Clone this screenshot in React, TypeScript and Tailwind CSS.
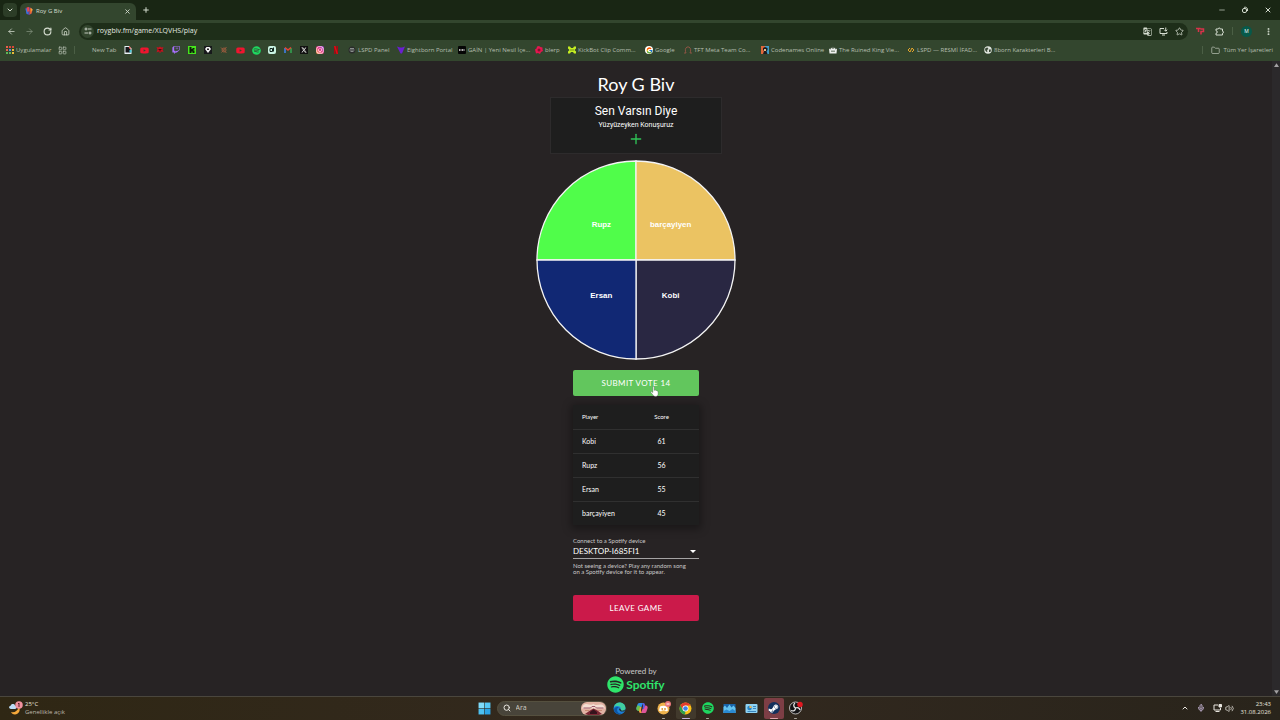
import { PropsWithChildren, ReactNode } from 'react'
import { clsx } from 'clsx'
import {
  ArrowLeft,
  ArrowRight,
  ChevronDown,
  ChevronUp,
  EllipsisVertical,
  Folder,
  House,
  LayoutGrid,
  Mic,
  Minus,
  Plus,
  RotateCw,
  Search,
  Star,
  Volume2,
  X
} from 'lucide-react'
import { FaInstagram, FaSpotify, FaSteamSymbol, FaTwitch, FaXTwitter, FaYoutube } from 'react-icons/fa6'
import { FcGoogle } from 'react-icons/fc'
import { MdGTranslate } from 'react-icons/md'

const uiFont = "font-['Open_Sans','Noto_Sans',sans-serif]"

/* ---------- small drawings ---------- */

const RoyIcon = () => (
  <svg viewBox="0 0 16 16" className="size-2 shrink-0">
    <path d="M1 3l7-3 7 4-1 8-5 4-6-2z" fill="#5b3fa0" />
    <path d="M1 3l5 1 1 11-4-2z" fill="#3478d8" />
    <path d="M3 1l5-1 1 8-4 2z" fill="#e5484d" />
    <path d="M10 1l5 4-2 8-4 2z" fill="#e8672e" />
    <path d="M12 2l3 3-2 5z" fill="#f2c036" />
  </svg>
)

const TuneIcon = () => (
  <svg viewBox="0 0 16 16" className="size-2" fill="none" stroke="currentColor" strokeWidth="1.8">
    <circle cx="4" cy="4" r="2" />
    <path d="M8 4h7M1 12h7" />
    <circle cx="12" cy="12" r="2" />
  </svg>
)

const InstallIcon = () => (
  <svg viewBox="0 0 18 18" className="size-[9px]" fill="none" stroke="currentColor" strokeWidth="2">
    <path d="M10 3H2v10h14v-3M6 16h6" />
    <path d="M13.500 1v7M10.500 5.500l3 3 3-3" />
  </svg>
)

const PuzzleIcon = () => (
  <svg viewBox="0 0 18 18" className="size-[9px]" fill="none" stroke="currentColor" strokeWidth="2">
    <path d="M2 4h4.500a2 2 0 0 1 4 0H15v4.500a2 2 0 0 1 0 4V16H2v-3.500a2 2 0 0 0 0-5z" strokeLinejoin="round" />
  </svg>
)

const AppsIcon = () => (
  <svg viewBox="0 0 8 8" className="size-2 shrink-0">
    <path d="M0 0h2v2H0zM0 3h2v2H0z" fill="#e8604c" />
    <path d="M0 6h2v2H0zM3 6h2v2H3z" fill="#5fb65a" />
    <path d="M3 0h2v2H3zM6 0h2v2H6z" fill="#d9493b" />
    <path d="M3 3h2v2H3z" fill="#4f8bf0" />
    <path d="M6 3h2v2H6zM6 6h2v2H6z" fill="#e9b93a" />
  </svg>
)

const PageIcon = () => (
  <svg viewBox="0 0 16 16" className="size-2">
    <path d="M1 0h9l5 5v11H1z" fill="#e9f1f5" />
    <path d="M3 2h6l4 4v7H3z" fill="#16181a" />
    <path d="M10 0l5 5h-5z" fill="#ef5350" />
    <path d="M11 8h4v5h-4z" fill="#48c7d8" />
  </svg>
)

const RedCrestIcon = () => (
  <svg viewBox="0 0 16 16" className="size-2">
    <path d="M1 2l4 1 3-2 3 2 4-1-2 5 2 5-4-1-3 3-3-3-4 2 2-6z" fill="#c4121f" />
    <path d="M5 6h6v2H9v3H7V8H5z" fill="#4a0a10" />
  </svg>
)

const KickIcon = () => (
  <svg viewBox="0 0 16 16" className="size-2">
    <path d="M0 0h16v16H0z" fill="#45e51c" />
    <path d="M3 2h4v4h2V4h4v3h-2v2h2v5H9v-3H7v3H3z" fill="#0c1d08" />
  </svg>
)

const DiamondIcon = () => (
  <svg viewBox="0 0 16 16" className="size-2">
    <path d="M0 0h16v16H0z" fill="#17191b" />
    <path d="M5 2h6l3 4-6 8-6-8z" fill="#f4f4f4" />
    <path d="M6 5h4v3H6z" fill="#222" />
  </svg>
)

const KnotIcon = () => (
  <svg viewBox="0 0 16 16" className="size-2" fill="none" stroke="#9a5b3d" strokeWidth="2">
    <path d="M2 3l11 11M13 2L3 13" />
    <circle cx="8" cy="8" r="4" />
  </svg>
)

const GlyphDIcon = () => (
  <svg viewBox="0 0 16 16" className="size-2">
    <rect width="16" height="16" rx="4" fill="#c9f3e2" />
    <path d="M4 5h5v6H4zM11 3v8" fill="none" stroke="#10251d" strokeWidth="2" />
  </svg>
)

const GmailIcon = () => (
  <svg viewBox="0 0 16 16" className="size-2" fill="none" strokeWidth="3">
    <path d="M2 14V4" stroke="#4285f4" />
    <path d="M14 14V4" stroke="#34a853" />
    <path d="M2 3l6 5 6-5" stroke="#ea4335" />
  </svg>
)

const RedBarsIcon = () => (
  <svg viewBox="0 0 16 16" className="size-2">
    <path d="M4 0h3v16H4zM9 0h3v16H9z" fill="#a80812" />
    <path d="M4 0h3l5 16H9z" fill="#e50914" />
  </svg>
)

const CapIcon = () => (
  <svg viewBox="0 0 16 16" className="size-2 shrink-0">
    <circle cx="8" cy="8" r="7" fill="#2a2c2b" />
    <path d="M4 5h8M3 8h10M5 11h6" stroke="#aab0ad" strokeWidth="1.5" />
  </svg>
)

const PurpleVIcon = () => (
  <svg viewBox="0 0 16 16" className="size-2 shrink-0">
    <path d="M0 1l6 2h4l6-2-6 14H7z" fill="#6a1fd0" />
  </svg>
)

const GainIcon = () => (
  <svg viewBox="0 0 16 16" className="size-2 shrink-0">
    <rect width="16" height="16" rx="2" fill="#050505" />
    <path d="M2 8h12" stroke="#eee" strokeWidth="3" strokeDasharray="2 1" />
  </svg>
)

const BlerpIcon = () => (
  <svg viewBox="0 0 16 16" className="size-2 shrink-0">
    <path d="M8 0l3 2 4 1v4l1 3-4 2-2 4-4-2-4 1-1-4-1-4 3-2 1-4z" fill="#e5164f" />
    <circle cx="8" cy="8" r="3" fill="#86122f" />
  </svg>
)

const KickBotIcon = () => (
  <svg viewBox="0 0 16 16" className="size-2 shrink-0">
    <path d="M0 1h4l2 3h4l2-3h4v4l-3 3 3 3v4h-4l-2-3H6l-2 3H0v-4l3-3-3-3z" fill="#c5ee22" />
    <path d="M5 7h2v2H5zM9 7h2v2H9z" fill="#293a13" />
  </svg>
)

const GoogleBadge = () => (
  <span className="flex size-2 shrink-0 items-center justify-center rounded-full bg-white">
    <FcGoogle className="size-[7px]" />
  </span>
)

const HornsIcon = () => (
  <svg viewBox="0 0 16 16" className="size-2 shrink-0" fill="none" stroke="#a3584a" strokeWidth="1.6">
    <path d="M6 2C2 4 2 10 4 14H0M10 2c4 2 4 8 2 12h4M6 2h4" />
  </svg>
)

const CodenamesIcon = () => (
  <svg viewBox="0 0 16 16" className="size-2 shrink-0">
    <path d="M0 0h8v16H0z" fill="#e0673a" />
    <path d="M8 0h8v16H8z" fill="#3f9cc7" />
    <path d="M4 4l4-2 5 2v4l-2 3 2 5H4l2-6-2-2z" fill="#1b1b20" />
    <path d="M6 6h4v4H6z" fill="#e8c08d" />
  </svg>
)

const CrownIcon = () => (
  <svg viewBox="0 0 16 16" className="size-2 shrink-0">
    <path d="M0 5l3 2 1-4 3 3 1-5 1 5 3-3 1 4 3-2-1 10H1z" fill="#eef0ee" />
    <path d="M5 9h2v3H5zM9 9h2v3H9z" fill="#33462e" />
  </svg>
)

const LoopIcon = () => (
  <svg viewBox="0 0 16 16" className="size-2 shrink-0" fill="none" stroke="#e5a52b" strokeWidth="2">
    <path d="M6 4L2 8l4 4 4-8 4 4-4 4" />
  </svg>
)

const GlobeIcon = () => (
  <svg viewBox="0 0 16 16" className="size-2 shrink-0">
    <circle cx="8" cy="8" r="7.5" fill="#dfe5dd" />
    <path d="M3 4l4-1 2 3-3 2 1 3-2 1-3-4zM10 7l4 0-1 5-3 0z" fill="#3c4b38" />
  </svg>
)

const HandCursor = () => (
  <svg viewBox="0 0 16 20" className="absolute left-[77px] top-4 h-[11px] w-[9px]">
    <path
      d="M5 1.500c0-1.500 2.500-1.500 2.500 0V8l1-.5c.8-.4 1.800 0 2 .8.9-.4 1.900 0 2.100.9 1-.3 1.900.3 1.900 1.300V14c0 3-1.500 5-4.500 5-2.600 0-3.800-1-5-3L1.500 12c-.8-1.500 1-2.600 2.100-1.300L5 12z"
      fill="#fff"
      stroke="#444"
      strokeWidth=".6"
    />
  </svg>
)

const WeatherIcon = () => (
  <svg viewBox="0 0 28 28" className="size-[14px]">
    <path d="M20 12c4 7-1 15-8 15-4 0-7-2-8-5 7 2 13-2 16-10z" fill="#f5a83b" />
    <path d="M4 16c-5 0-5-6-1-6 1-5 8-5 9-1 4 0 4 7 0 7z" fill="#bcdcf5" />
    <circle cx="20" cy="8" r="7.500" fill="#f0919e" />
    <path d="M18 6l2-2v8" stroke="#5a1e2c" strokeWidth="2" fill="none" />
  </svg>
)

const WindowsIcon = () => (
  <svg viewBox="0 0 24 24" className="size-[13px]">
    <path d="M1 1h10.500v10.500H1z" fill="#7fdcfb" />
    <path d="M12.500 1H23v10.500H12.500z" fill="#56c8f5" />
    <path d="M1 12.500h10.500V23H1z" fill="#4cc0f0" />
    <path d="M12.500 12.500H23V23H12.500z" fill="#2ba3e4" />
  </svg>
)

const SearchArt = () => (
  <svg viewBox="0 0 50 26" className="h-[13px] w-[25px] shrink-0">
    <rect width="50" height="26" rx="12" fill="#e2b3a3" />
    <path d="M4 7c8-8 14 2 21-3 7 6 13-3 21 4l2 5H2z" fill="#f3ded2" />
    <path d="M8 24l10-7 7-4 8 4 9 7-6 2H14z" fill="#7a2733" />
    <path d="M5 12h14l3-3h6l3 3h14" stroke="#9d5a6c" strokeWidth="2" fill="none" />
    <path d="M8 17h8M34 17h8" stroke="#c98a72" strokeWidth="2" />
    <path d="M18 20l7-5 7 5v4H18z" fill="#35131c" />
  </svg>
)

const EdgeIcon = () => (
  <svg viewBox="0 0 24 24" className="size-[13px]">
    <circle cx="12" cy="12" r="11" fill="#1b7fd6" />
    <path d="M1.500 10C3 4 7 1 12 1c7 0 11 5 11 10 0 4-3 6-7 5-3-1-1-2-2-5-1-4-8-5-12.500-1z" fill="#41cf9f" />
    <path d="M8 12c-2 5 2 10 8 9-6 4-14 0-14-7 0-4 5-6 9-4-1 0-2 1-3 2z" fill="#0d55a3" />
    <path d="M11 12c0 5 5 7 10 5l2-4c-2 3-9 5-9 0z" fill="#26282c" />
  </svg>
)

const CopilotIcon = () => (
  <svg viewBox="0 0 24 24" className="size-3">
    <path d="M7 2h7l-3 8H9L7 17H5c-4 0-5-3-4-6l2-6c1-2 2-3 4-3z" fill="#2d8ee8" />
    <path d="M1 11c-1 4 1 7 5 7h2l2-7-4-4H3z" fill="#6cc04a" />
    <path d="M17 22h-7l3-8h2l2-7h2c4 0 5 3 4 6l-2 6c-1 2-2 3-4 3z" fill="#e0559a" />
    <path d="M13 2h2c2 0 3 2 3 5l-2 7h-3l1-6z" fill="#5a5be0" />
    <path d="M11 22H9c-2 0-3-2-3-4l2-8h3l-1 6z" fill="#f0a03c" />
  </svg>
)

const DiscordIcon = () => (
  <svg viewBox="0 0 28 28" className="size-[14px]">
    <circle cx="13" cy="15" r="12" fill="#efb24c" />
    <path d="M6 11c4-2 10-2 14 0l2 8-4 2-2-2h-6l-2 2-4-2z" fill="#fff" />
    <circle cx="10.500" cy="16" r="1.800" fill="#d9902c" />
    <circle cx="16" cy="16" r="1.800" fill="#d9902c" />
    <circle cx="22" cy="6" r="6" fill="#e9787c" />
    <path d="M19 6h6" stroke="#fff" strokeWidth="2" />
  </svg>
)

const ChromeIcon = () => (
  <svg viewBox="0 0 24 24" className="size-[13px]">
    <circle cx="12" cy="12" r="11" fill="#fbc116" />
    <path d="M2.500 6.500A11 11 0 0 1 21.500 6.500H12L7 15z" fill="#e33b2e" />
    <path d="M2.500 6.500L7.500 15 12 17.500 11 23A11 11 0 0 1 2.500 6.500z" fill="#2da04d" />
    <circle cx="12" cy="12" r="5.500" fill="#fff" />
    <circle cx="12" cy="12" r="4.200" fill="#3f7fe8" />
  </svg>
)

const MonitorChartIcon = () => (
  <svg viewBox="0 0 26 22" className="h-[11px] w-[13px]">
    <path d="M1 2h24v18H1z" fill="#1a64a8" />
    <path d="M1 20V8l3-3 4 5 5-7 4 6 4-4 4 5v10z" fill="#64c4f0" />
    <path d="M1 20v-4l6-3 6 3 6-4 6 4v4z" fill="#2b8ad0" />
  </svg>
)

const ControlPanelIcon = () => (
  <svg viewBox="0 0 26 22" className="h-[11px] w-[13px]">
    <rect x="1" y="2" width="24" height="18" rx="2" fill="#8fd3f2" />
    <circle cx="9" cy="10" r="4.500" fill="#2783c6" />
    <path d="M9 10V5.500a4.500 4.500 0 0 1 4.500 4.500z" fill="#f7b54a" />
    <path d="M16 7h6M16 11h6M5 17h17" stroke="#2371ae" strokeWidth="1.600" />
  </svg>
)

const ObsIcon = () => (
  <svg viewBox="0 0 28 28" className="size-[14px]">
    <circle cx="13" cy="14" r="12" fill="#141416" stroke="#dedede" strokeWidth="1.600" />
    <path
      d="M12 4c-4 3-3 8 1 10 4-2 8 0 9 4M13 14c0 5-4 7-9 5"
      fill="none"
      stroke="#e2e2e2"
      strokeWidth="2.600"
    />
    <circle cx="22" cy="7" r="5.500" fill="#e01820" />
  </svg>
)

/* ---------- browser chrome ---------- */

const TitleBar = () => (
  <div className="flex h-5 items-end bg-[#192614] pl-[3px] text-[#d5ddd0]">
    <button aria-label="Search tabs" className="mb-[3px] flex h-[14px] w-[14px] items-center justify-center rounded bg-[#2c3d27]">
      <ChevronDown className="size-2" strokeWidth={3} />
    </button>
    <div className="ml-[3px] flex h-[17px] w-[116px] items-center gap-[3px] rounded-t-md bg-[#33462e] px-[5px] pb-px">
      <RoyIcon />
      <span className="flex-1 text-[6px] leading-2">Roy G Biv</span>
      <button aria-label="Close tab">
        <X className="size-[7px]" strokeWidth={3} />
      </button>
    </div>
    <button aria-label="New tab" className="mb-[6px] ml-[6px]">
      <Plus className="size-2" strokeWidth={3} />
    </button>
    <div className="mb-[6px] ml-auto mr-2 flex items-center gap-[15px]">
      <button aria-label="Minimize">
        <Minus className="size-2" strokeWidth={2} />
      </button>
      <button aria-label="Restore">
        <svg viewBox="0 0 16 16" className="size-2" fill="none" stroke="currentColor" strokeWidth="2">
          <rect x="3" y="5" width="8" height="8" rx="3" />
          <path d="M6 3c4-2 8 1 7 7" />
        </svg>
      </button>
      <button aria-label="Close">
        <X className="size-2" strokeWidth={3} />
      </button>
    </div>
  </div>
)

const Toolbar = () => (
  <div className="flex h-[22px] items-center bg-[#33462e] px-[7px] text-[#d5ddd0]">
    <div className="flex w-[72px] items-center gap-[9px]">
      <button aria-label="Back">
        <ArrowLeft className="size-[9px]" strokeWidth={2} />
      </button>
      <button aria-label="Forward" className="text-[#82907c]">
        <ArrowRight className="size-[9px]" strokeWidth={2} />
      </button>
      <button aria-label="Reload">
        <RotateCw className="size-[9px]" strokeWidth={3} />
      </button>
      <button aria-label="Home">
        <House className="size-[9px]" strokeWidth={2} />
      </button>
    </div>
    <div className="flex h-[17px] flex-1 items-center gap-[7px] rounded-full bg-[#1e2e19] pl-[2px] pr-1">
      <button aria-label="Site settings" className="flex size-[13px] items-center justify-center rounded-full bg-[#33462e]">
        <TuneIcon />
      </button>
      <input
        aria-label="Address"
        defaultValue="roygbiv.fm/game/XLQVHS/play"
        className="-ml-1 min-w-0 flex-1 bg-transparent text-[7px] leading-3 text-[#e4eae0] outline-none"
      />
      <button aria-label="Translate">
        <MdGTranslate className="size-[9px]" />
      </button>
      <button aria-label="Install">
        <InstallIcon />
      </button>
      <button aria-label="Bookmark">
        <Star className="size-[9px]" strokeWidth={2} />
      </button>
    </div>
    <div className="flex items-center pl-2">
      <button aria-label="Extension">
        <svg viewBox="0 0 18 16" className="h-2 w-[9px]" fill="none" stroke="#d8324a" strokeWidth="3">
          <path d="M0 3h9M5 3v7M9 4h6v5h-5v6" />
        </svg>
      </button>
      <button aria-label="Extensions" className="ml-[10px]">
        <PuzzleIcon />
      </button>
      <span className="ml-2 h-2 w-px bg-[#4b5f45]" />
      <button className="ml-2 flex size-[11px] items-center justify-center rounded-full bg-[#07594a] text-[5px] leading-none text-white">
        M
      </button>
      <button aria-label="Menu" className="ml-3">
        <EllipsisVertical className="size-[9px]" strokeWidth={3} />
      </button>
    </div>
  </div>
)

const shortcuts: [string, ReactNode][] = [
  ['Page', <PageIcon />],
  ['YouTube', <FaYoutube className="size-[9px] text-[#f0142f]" />],
  ['Crest', <RedCrestIcon />],
  ['Twitch', <FaTwitch className="size-2 text-[#a970ff]" />],
  ['Kick', <KickIcon />],
  ['Diamond', <DiamondIcon />],
  ['Knot', <KnotIcon />],
  ['YouTube Studio', <FaYoutube className="size-[9px] text-[#f0142f]" />],
  ['Spotify', <FaSpotify className="size-[9px] text-[#1ed760]" />],
  ['Draw', <GlyphDIcon />],
  ['Gmail', <GmailIcon />],
  ['X', <FaXTwitter className="size-2 bg-[#111] p-px text-white" />],
  ['Instagram', <FaInstagram className="size-2 rounded-xs bg-linear-to-tr from-[#fd9a2b] via-[#e8307c] to-[#9437d6] text-white" />],
  ['Video', <RedBarsIcon />]
]

const bookmarks: { label: string; width: string; icon: ReactNode }[] = [
  { label: 'LSPD Panel', width: 'w-[49px]', icon: <CapIcon /> },
  { label: 'Eightborn Portal', width: 'w-[61px]', icon: <PurpleVIcon /> },
  { label: 'GAİN | Yeni Nesil İçe...', width: 'w-[77px]', icon: <GainIcon /> },
  { label: 'blerp', width: 'w-[33px]', icon: <BlerpIcon /> },
  { label: 'KickBot Clip Comm...', width: 'w-[77px]', icon: <KickBotIcon /> },
  { label: 'Google', width: 'w-[39px]', icon: <GoogleBadge /> },
  { label: 'TFT Meta Team Co...', width: 'w-[77px]', icon: <HornsIcon /> },
  { label: 'Codenames Online', width: 'w-[68px]', icon: <CodenamesIcon /> },
  { label: 'The Ruined King Vie...', width: 'w-[78px]', icon: <CrownIcon /> },
  { label: 'LSPD — RESMİ İFAD...', width: 'w-[77px]', icon: <LoopIcon /> },
  { label: '8born Karakterleri B...', width: 'w-[77px]', icon: <GlobeIcon /> }
]

const BookmarkBar = () => (
  <nav className="flex h-[19px] items-center whitespace-nowrap bg-[#33462e] pb-[3px] pl-[6px] pr-[7px] text-[6px] leading-2 text-[#b5bfb0]">
    <a href="#apps" className="flex w-[52px] items-center gap-[2px]">
      <AppsIcon />
      Uygulamalar
    </a>
    <button aria-label="Tab groups">
      <LayoutGrid className="size-[9px]" strokeWidth={2} />
    </button>
    <span className="ml-[7px] h-2 w-px bg-[#4b5f45]" />
    <a href="#new" className="ml-[17px] w-8">
      New Tab
    </a>
    {shortcuts.map(([name, icon]) => (
      <a key={name} href="#shortcut" aria-label={name} className="flex w-4 shrink-0 items-center">
        {icon}
      </a>
    ))}
    {bookmarks.map(({ label, width, icon }) => (
      <a key={label} href="#bookmark" className={clsx('flex shrink-0 items-center gap-[2px]', width)}>
        {icon}
        {label}
      </a>
    ))}
    <span className="ml-auto h-2 w-px bg-[#4b5f45]" />
    <button className="ml-2 flex items-center gap-[3px]">
      <Folder className="size-[9px]" strokeWidth={2} />
      Tüm Yer İşaretleri
    </button>
  </nav>
)

/* ---------- game ---------- */

const players = [
  { name: 'Kobi', score: 61 },
  { name: 'Rupz', score: 56 },
  { name: 'Ersan', score: 55 },
  { name: 'barçayiyen', score: 45 }
]

const slices = [
  { name: 'Rupz', color: '#50fd4a', d: 'M100 100V0A100 100 0 0 0 0 100z', x: 65, y: 67 },
  { name: 'barçayiyen', color: '#ebc362', d: 'M100 100H200A100 100 0 0 0 100 0z', x: 135, y: 67 },
  { name: 'Kobi', color: '#292742', d: 'M100 100V200A100 100 0 0 0 200 100z', x: 135, y: 138 },
  { name: 'Ersan', color: '#112874', d: 'M100 100H0A100 100 0 0 0 100 200z', x: 65, y: 138 }
]

const Wheel = () => (
  <svg viewBox="-1 -1 202 202" className="mt-[6px] size-[200px]">
    {slices.map(({ name, color, d, x, y }) => (
      <g key={name}>
        <path d={d} fill={color} stroke="#f4f4f4" strokeWidth="1.3" />
        <text x={x} y={y} textAnchor="middle" className="fill-white font-['Liberation_Sans',sans-serif] text-[8px] font-bold">
          {name}
        </text>
      </g>
    ))}
  </svg>
)

const GameButton = ({ children, className }: PropsWithChildren<{ className: string }>) => (
  <button className={clsx('relative h-[26px] w-full rounded-xs text-[8px] leading-3 tracking-wider text-white', className)}>
    {children}
  </button>
)

const ScoreTable = () => (
  <table className="mt-[9px] w-full table-fixed bg-[#1e1e1e] text-[7px] leading-3 text-white shadow-[0_2px_8px_2px_rgba(0,0,0,0.35)]">
    <thead>
      <tr className="h-6 border-b border-[#303030] text-[6px]">
        <th className="w-[76px] pl-[9px] text-left font-normal">Player</th>
        <th className="pr-[25px] text-center font-normal">Score</th>
      </tr>
    </thead>
    <tbody>
      {players.map(({ name, score }) => (
        <tr key={name} className="h-6 border-b border-[#303030] last:border-b-0">
          <td className="pl-[9px]">{name}</td>
          <td className="pr-[25px] text-center">{score}</td>
        </tr>
      ))}
    </tbody>
  </table>
)

const DevicePicker = () => (
  <div className="mt-3 w-full text-[#c9c8c8]">
    <label htmlFor="device" className="block text-[6px] leading-2">
      Connect to a Spotify device
    </label>
    <div className="relative">
      <select
        id="device"
        className="block h-[14px] w-full appearance-none border-b border-[#a5a3a4] bg-transparent pb-[2px] text-[8px] leading-3 text-white outline-none"
      >
        <option>DESKTOP-I685FI1</option>
      </select>
      <svg viewBox="0 0 10 5" className="pointer-events-none absolute right-[3px] top-[5px] h-[3px] w-[6px]">
        <path d="M0 0h10L5 5z" fill="#fff" />
      </svg>
    </div>
    <p className="mt-1 text-[6px] leading-[6px]">
      Not seeing a device? Play any random song
      <br />
      on a Spotify device for it to appear.
    </p>
  </div>
)

const Game = () => (
  <main className="flex flex-1 flex-col items-center font-['Lato',sans-serif] text-white">
    <h1 className="mt-[11px] text-[18px] leading-6">Roy G Biv</h1>
    <section className="mt-px flex h-[57px] w-[172px] flex-col items-center border border-[#2d2b2c] bg-[#1e1e1e] pt-[5px] font-['Roboto',sans-serif]">
      <h2 className="text-[12px] leading-4">Sen Varsın Diye</h2>
      <p className="text-[7px] leading-3">Yüzyüzeyken Konuşuruz</p>
      <button aria-label="Add song">
        <Plus className="size-4 text-[#2fc457]" strokeWidth={2} />
      </button>
    </section>
    <Wheel />
    <div className="mt-[10px] flex w-[126px] flex-col items-center">
      <GameButton className="bg-[#62c65d]">
        SUBMIT VOTE 14
        <HandCursor />
      </GameButton>
      <ScoreTable />
      <DevicePicker />
      <GameButton className="mt-5 bg-[#cb1a4a]">LEAVE GAME</GameButton>
    </div>
    <footer className="mt-auto flex flex-col items-center pb-[3px] text-[#c9c8c8]">
      <p className="text-[8px] leading-[10px]">Powered by</p>
      <a href="#spotify" className="flex items-center gap-[2px] text-[12px] font-bold leading-[17px] text-[#2fe46b]">
        <FaSpotify className="size-[17px]" />
        Spotify
      </a>
    </footer>
  </main>
)

const ScrollBar = () => (
  <div className="flex w-2 flex-col items-center justify-between bg-[#2b292b] py-[2px]">
    <svg viewBox="0 0 8 6" className="h-1 w-[5px]">
      <path d="M4 0l4 6H0z" fill="#a3a1a3" />
    </svg>
    <svg viewBox="0 0 8 6" className="h-1 w-[5px]">
      <path d="M0 0h8L4 6z" fill="#a3a1a3" />
    </svg>
  </div>
)

/* ---------- taskbar ---------- */

const TaskButton = ({
  name,
  mark,
  className,
  children
}: PropsWithChildren<{ name: string; mark?: string; className?: string }>) => (
  <button aria-label={name} className={clsx('relative flex h-[21px] w-5 items-center justify-center rounded-xs', className)}>
    {children}
    {mark ? <span className={clsx('absolute bottom-0 h-px rounded-full', mark)} /> : null}
  </button>
)

const TaskBar = () => (
  <footer className="grid h-[24px] grid-cols-[1fr_auto_1fr] items-center border-t border-[#4a463d] bg-linear-to-r from-[#2f2714] via-[#33291f] to-[#29241b] pb-px text-[6px] leading-2 text-[#e8e5df]">
    <button className="flex items-center gap-[2px] justify-self-start pl-[9px] text-left">
      <WeatherIcon />
      <span>
        25°C
        <br />
        <span className="text-[#bdb8ae]">Genellikle açık</span>
      </span>
    </button>
    <div className="flex items-center gap-[2px]">
      <TaskButton name="Start">
        <WindowsIcon />
      </TaskButton>
      <label className="mr-px flex h-[15px] w-[110px] items-center gap-[5px] rounded-full border border-[#55503f] bg-[#48443a] pl-[5px]">
        <Search className="size-2 shrink-0" strokeWidth={3} />
        <input
          aria-label="Ara"
          placeholder="Ara"
          className="min-w-0 flex-1 bg-transparent text-[7px] leading-3 outline-none placeholder:text-[#cfcbc3]"
        />
        <SearchArt />
      </label>
      <TaskButton name="Edge">
        <EdgeIcon />
      </TaskButton>
      <TaskButton name="Copilot">
        <CopilotIcon />
      </TaskButton>
      <TaskButton name="Discord" mark="w-[3px] bg-[#a9a59c]">
        <DiscordIcon />
      </TaskButton>
      <TaskButton name="Chrome" mark="w-2 bg-[#c6b3dd]" className="bg-[#41392c]">
        <ChromeIcon />
      </TaskButton>
      <TaskButton name="Spotify" mark="w-[3px] bg-[#a9a59c]">
        <FaSpotify className="size-3 text-[#1ed760]" />
      </TaskButton>
      <TaskButton name="Monitor">
        <MonitorChartIcon />
      </TaskButton>
      <TaskButton name="Control panel">
        <ControlPanelIcon />
      </TaskButton>
      <TaskButton name="Steam" mark="w-2 bg-[#e3a5ad]" className="bg-[#7d3e45]">
        <span className="flex size-3 items-center justify-center rounded-full bg-[#12305c]">
          <FaSteamSymbol className="size-[11px] text-white" />
        </span>
      </TaskButton>
      <TaskButton name="OBS" mark="w-[3px] bg-[#a9a59c]">
        <ObsIcon />
      </TaskButton>
    </div>
    <div className="flex items-center justify-self-end pr-[9px]">
      <ChevronUp className="size-2" strokeWidth={3} />
      <Mic className="ml-2 size-2 text-[#b9a9c6]" strokeWidth={3} />
      <svg viewBox="0 0 18 16" className="ml-2 h-2 w-[9px]" fill="none" stroke="currentColor" strokeWidth="2">
        <path d="M10 2H2v10h13V8M5 15h8" />
        <path d="M12 1h5v5h-5z" fill="currentColor" />
      </svg>
      <Volume2 className="ml-[3px] size-[9px]" strokeWidth={2} />
      <p className="ml-[6px] text-right">
        23:43
        <br />
        31.08.2026
      </p>
    </div>
  </footer>
)

export default function App() {
  return (
    <div className={clsx('flex min-h-screen flex-col bg-[#272324]', uiFont)}>
      <header>
        <TitleBar />
        <Toolbar />
        <BookmarkBar />
      </header>
      <div className="flex flex-1">
        <Game />
        <ScrollBar />
      </div>
      <TaskBar />
    </div>
  )
}
